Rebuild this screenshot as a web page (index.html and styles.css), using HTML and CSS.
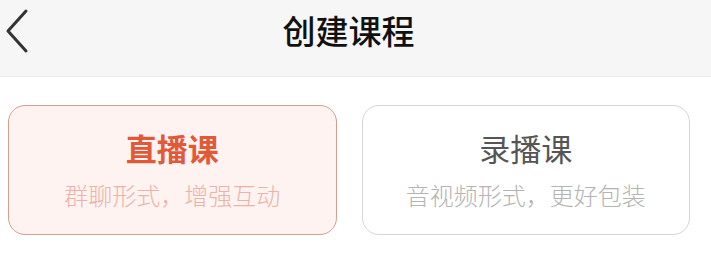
FILE: index.html
```html
<!DOCTYPE html>
<html lang="zh">
<head>
<meta charset="utf-8">
<link rel="stylesheet" href="styles.css">
</head>
<body>
<header class="nav">
  <span class="back">
    <svg width="26" height="46" viewBox="0 0 26 46"><path d="M22 3 L4 23 L22 43" fill="none" stroke="#333" stroke-width="3" stroke-linecap="round" stroke-linejoin="round"/></svg>
  </span>
  <h1 class="title">创建课程</h1>
</header>
<main class="cards">
  <div class="card active">
    <div class="card-title">直播课</div>
    <div class="card-sub">群聊形式，增强互动</div>
  </div>
  <div class="card">
    <div class="card-title">录播课</div>
    <div class="card-sub">音视频形式，更好包装</div>
  </div>
</main>
</body>
</html>
```
FILE: styles.css
```css
* { box-sizing: border-box; }
html, body { margin: 0; padding: 0; background: #fff; }
body {
  width: 711px;
  height: 268px;
  font-family: "Noto Sans CJK SC", "Noto Sans", sans-serif;
  overflow: hidden;
}
.nav {
  position: relative;
  height: 77px;
  background: #f6f6f6;
  border-bottom: 1px solid #ececec;
  display: flex;
  align-items: center;
  justify-content: center;
}
.back {
  position: absolute;
  left: 4px;
  top: 8px;
  display: flex;
}
.title {
  margin: 0 14px 17px 0;
  font-size: 33px;
  line-height: 44px;
  font-weight: 500;
  color: #111;
}
.cards {
  display: flex;
  gap: 25px;
  padding: 28px 21px 0 8px;
}
.card {
  flex: 1;
  height: 130px;
  border: 1px solid #d6d6d6;
  border-radius: 17px;
  background: #fff;
  display: flex;
  flex-direction: column;
  align-items: center;
  padding-top: 22px;
}
.card-title {
  font-size: 31px;
  line-height: 40px;
  color: #555;
}
.card-sub {
  margin-top: 11px;
  font-size: 24px;
  line-height: 32px;
  font-weight: 300;
  color: #b4b4b4;
}
.card.active {
  background: #fff3f1;
  border-color: #d49d90;
}
.card.active .card-title {
  color: #e05a3a;
  font-weight: 700;
}
.card.active .card-sub {
  color: #ebb3a8;
}
```
